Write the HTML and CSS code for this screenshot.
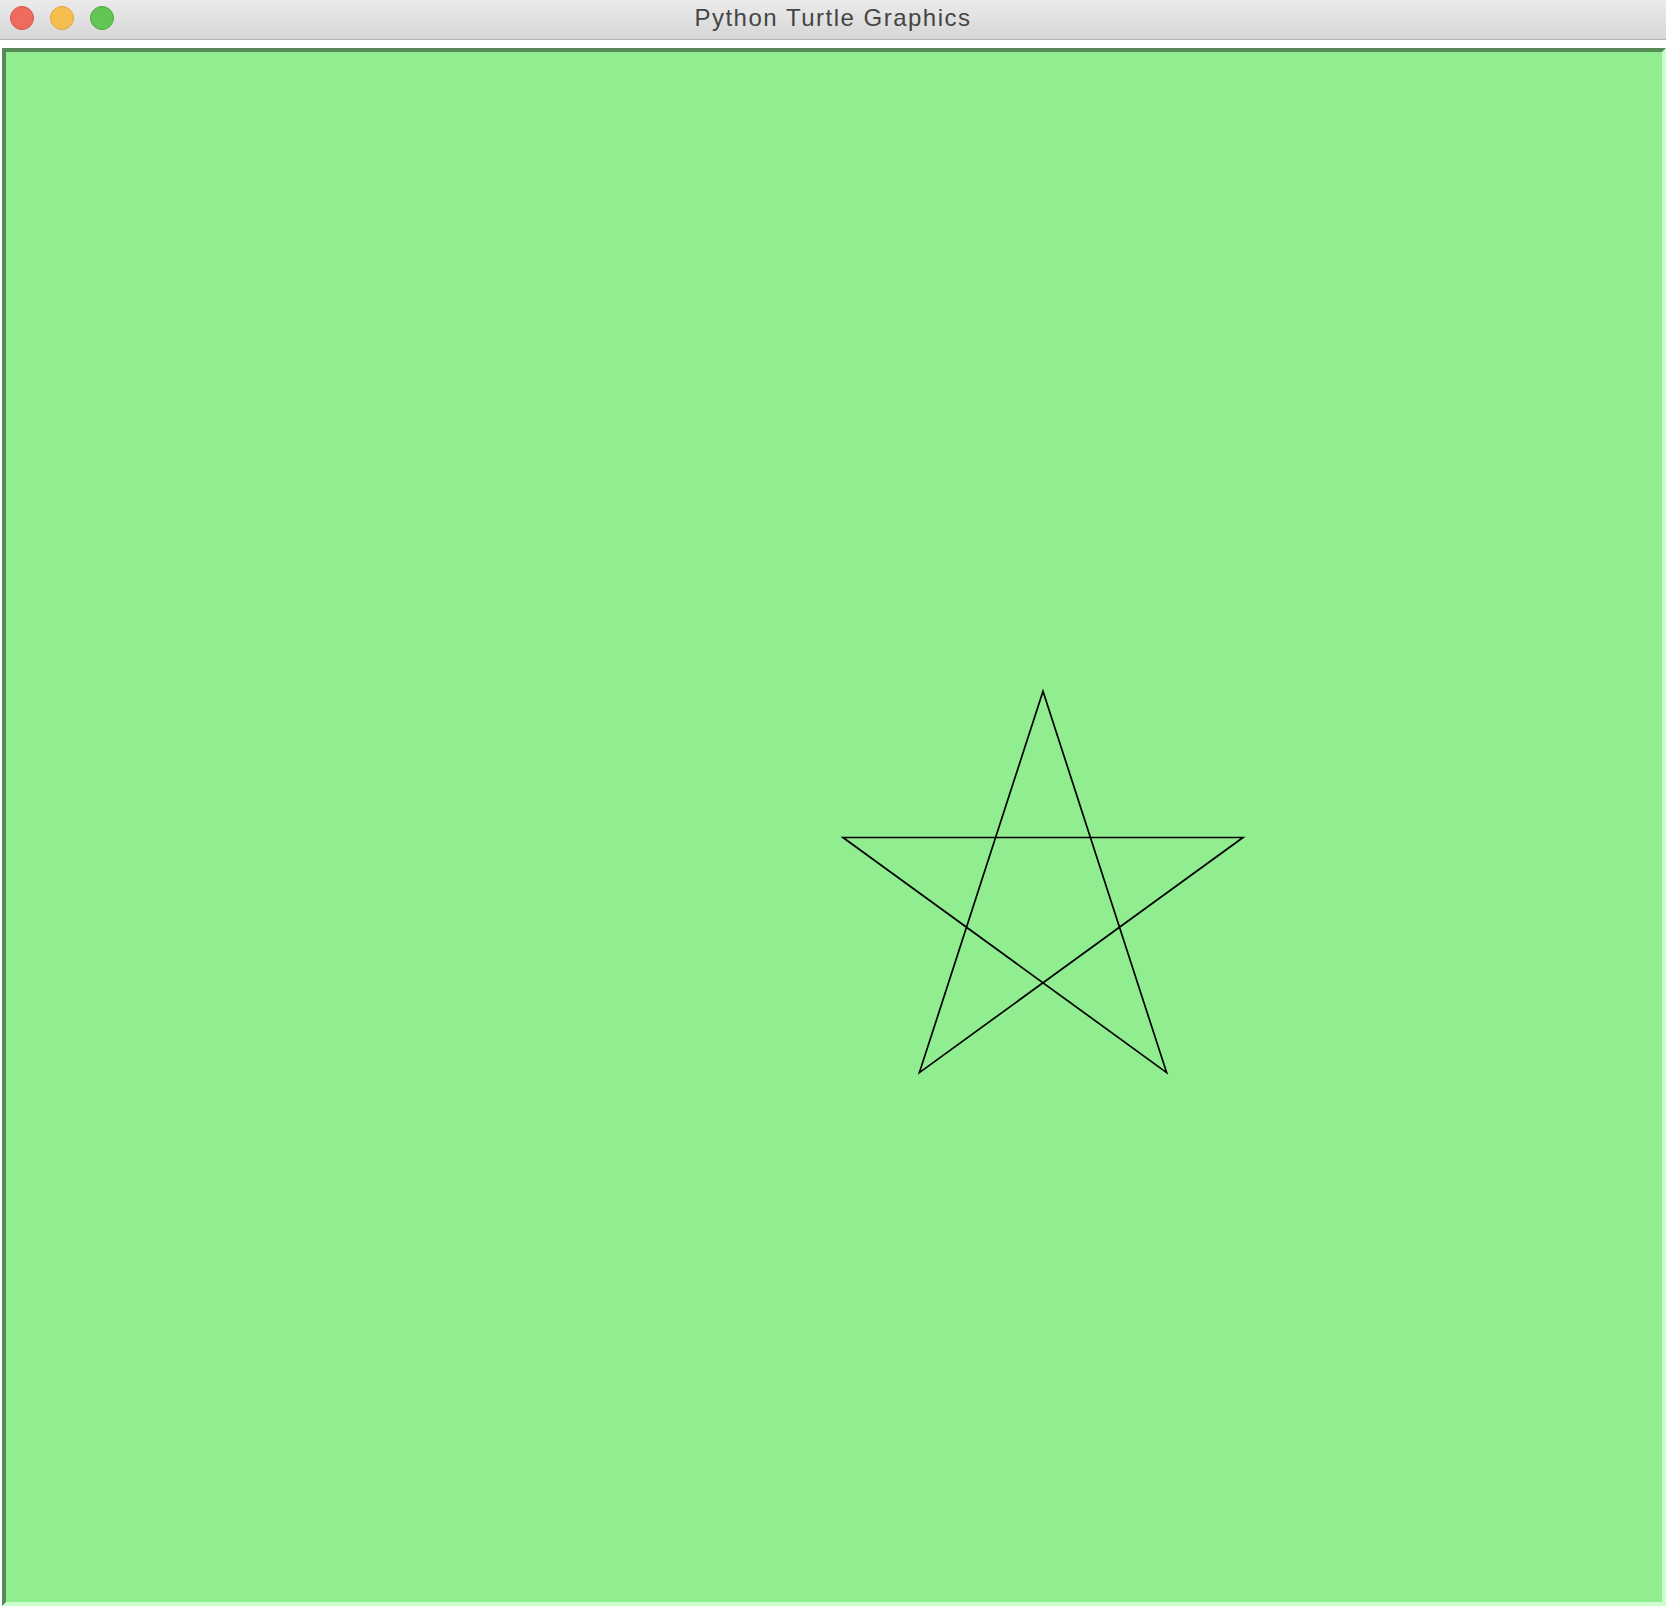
FILE: index.html
```html
<!DOCTYPE html>
<html>
<head>
<meta charset="utf-8">
<title>Python Turtle Graphics</title>
<link rel="stylesheet" href="styles.css">
</head>
<body>
<div class="window">
  <div class="titlebar">
    <div class="lights">
      <span class="light close"></span>
      <span class="light min"></span>
      <span class="light max"></span>
    </div>
    <div class="title">Python Turtle Graphics</div>
    <div class="spacer"></div>
  </div>
  <div class="content">
    <div class="canvas">
      <svg class="drawing" width="1656" height="1550" viewBox="0 0 1656 1550">
        <polygon points="837,785.5 1237,785.5 913.4,1020.6 1037,639.2 1160.6,1020.6" fill="none" stroke="#000" stroke-width="1.7" stroke-linejoin="miter"/>
      </svg>
    </div>
  </div>
</div>
</body>
</html>
```

FILE: styles.css
```css
html, body {
  margin: 0;
  padding: 0;
  background: #ffffff;
}

.window {
  width: 1666px;
  height: 1608px;
  overflow: hidden;
  background: #ffffff;
}

.titlebar {
  height: 39px;
  border-bottom: 1px solid #b4b4b4;
  background: linear-gradient(to bottom, #ebebeb 0%, #d6d6d6 100%);
  display: grid;
  grid-template-columns: 1fr auto 1fr;
  align-items: center;
  box-sizing: content-box;
}

.lights {
  display: flex;
  gap: 16px;
  padding-left: 10px;
  padding-bottom: 3px;
}

.light {
  width: 22px;
  height: 22px;
  border-radius: 50%;
  border: 1px solid transparent;
  display: block;
}

.light.close {
  background: #ee6b60;
  border-color: #d8544a;
}

.light.min {
  background: #f6be4f;
  border-color: #dfa33a;
}

.light.max {
  background: #62c655;
  border-color: #4ea93f;
}

.title {
  font-family: "Liberation Sans", Arial, sans-serif;
  font-size: 24px;
  letter-spacing: 1.5px;
  color: #454545;
  line-height: 35px;
  padding-bottom: 4px;
}

.content {
  padding: 8px 0 0 2px;
}

.canvas {
  width: 1656px;
  height: 1550px;
  background: #90ee90;
  border-top: 4px solid #578a57;
  border-left: 4px solid #578a57;
  border-right: 4px solid #ccffcc;
  border-bottom: 4px solid #ccffcc;
}

.drawing {
  display: block;
}
```
